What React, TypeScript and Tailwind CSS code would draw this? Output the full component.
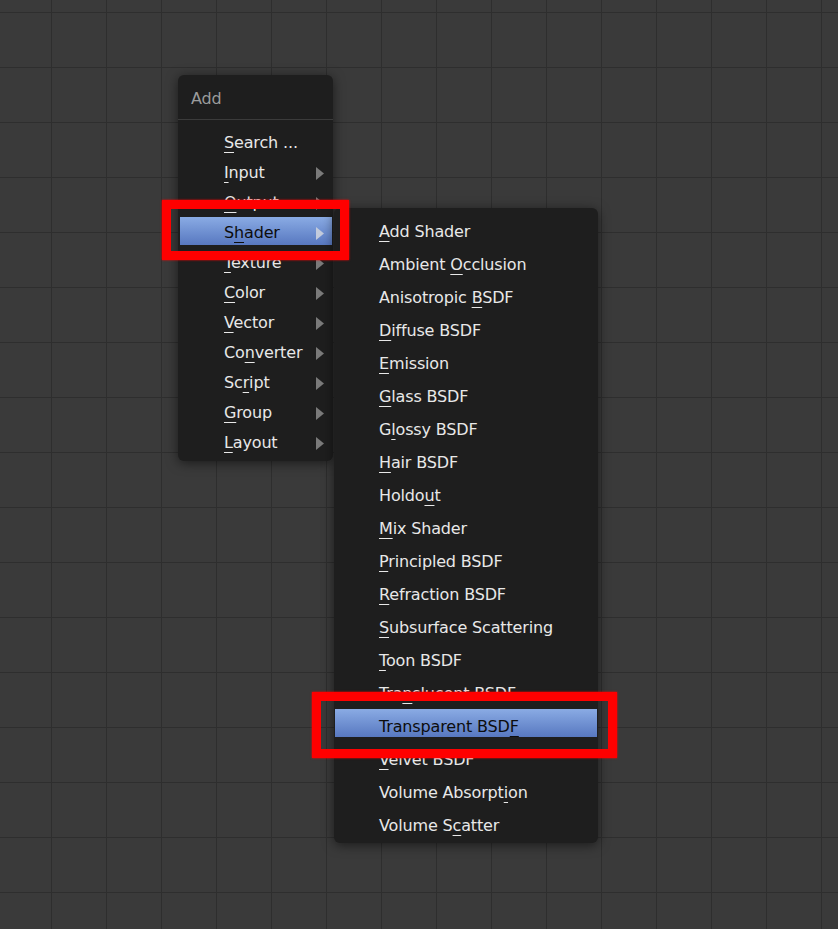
import React from "react";

type Item = { pre: string; key: string; post: string; sub?: boolean };

const addItems: Item[] = [
  { pre: "", key: "S", post: "earch ..." },
  { pre: "", key: "I", post: "nput", sub: true },
  { pre: "", key: "O", post: "utput", sub: true },
  { pre: "S", key: "h", post: "ader", sub: true },
  { pre: "", key: "T", post: "exture", sub: true },
  { pre: "", key: "C", post: "olor", sub: true },
  { pre: "", key: "V", post: "ector", sub: true },
  { pre: "Co", key: "n", post: "verter", sub: true },
  { pre: "Sc", key: "r", post: "ipt", sub: true },
  { pre: "", key: "G", post: "roup", sub: true },
  { pre: "", key: "L", post: "ayout", sub: true },
];

const shaderItems: Item[] = [
  { pre: "", key: "A", post: "dd Shader" },
  { pre: "Ambient ", key: "O", post: "cclusion" },
  { pre: "Anisotropic ", key: "B", post: "SDF" },
  { pre: "", key: "D", post: "iffuse BSDF" },
  { pre: "", key: "E", post: "mission" },
  { pre: "", key: "G", post: "lass BSDF" },
  { pre: "G", key: "l", post: "ossy BSDF" },
  { pre: "", key: "H", post: "air BSDF" },
  { pre: "Holdo", key: "u", post: "t" },
  { pre: "", key: "M", post: "ix Shader" },
  { pre: "", key: "P", post: "rincipled BSDF" },
  { pre: "", key: "R", post: "efraction BSDF" },
  { pre: "", key: "S", post: "ubsurface Scattering" },
  { pre: "", key: "T", post: "oon BSDF" },
  { pre: "Tra", key: "n", post: "slucent BSDF" },
  { pre: "Transparent BSD", key: "F", post: "" },
  { pre: "", key: "V", post: "elvet BSDF" },
  { pre: "Volume Absorpt", key: "i", post: "on" },
  { pre: "Volume S", key: "c", post: "atter" },
];

function Arrow({ active }: { active?: boolean }) {
  return (
    <svg width="8" height="13" viewBox="0 0 8 13" className="shrink-0">
      <polygon points="0,0 8,6.5 0,13" fill={active ? "#c3cbdc" : "#7a7a7a"} />
    </svg>
  );
}

function Label({ item }: { item: Item }) {
  return (
    <span className="whitespace-pre">
      {item.pre}
      <span className="underline decoration-1 underline-offset-[4px]">{item.key}</span>
      {item.post}
    </span>
  );
}

export default function App() {
  return (
    <div
      className="relative h-[929px] w-[838px] overflow-hidden bg-[#3a3a3a] bg-[linear-gradient(to_right,#2e2e2e_1px,transparent_1px),linear-gradient(to_bottom,#2e2e2e_1px,transparent_1px)] bg-[size:55px_55px] bg-[position:51px_12px] text-[16px] tracking-[-0.15px] text-[#e8e8e8]"
      style={{ fontFamily: '"DejaVu Sans", "Liberation Sans", sans-serif' }}
    >
      {/* Add menu */}
      <div className="absolute left-[178px] top-[75px] flex h-[386px] w-[155px] flex-col rounded-md bg-[#1e1e1e] shadow-[0_2px_12px_rgba(0,0,0,0.55)]">
        <div className="flex h-[44px] items-center px-[13px] pt-[4px] text-[#9b9b9b]">Add</div>
        <div className="h-px bg-[#3b3b3b]" />
        <div className="flex flex-col gap-[2px] pl-[2px] pr-[1px] pt-[7px]">
          {addItems.map((it, i) => {
            const active = i === 3;
            return (
              <div
                key={i}
                className={
                  active
                    ? "flex h-[28px] items-center bg-gradient-to-b from-[#8aabe4] to-[#5878c0] pl-[44px] pr-[8px] pt-[4px] text-[#0d0d0d]"
                    : "flex h-[28px] items-center pl-[44px] pr-[8px] pt-[4px]"
                }
              >
                <Label item={it} />
                <div className="ml-auto">{it.sub ? <Arrow active={active} /> : null}</div>
              </div>
            );
          })}
        </div>
      </div>

      {/* Shader submenu */}
      <div className="absolute left-[334px] top-[208px] flex h-[635px] w-[264px] flex-col gap-[5px] rounded-md bg-[#1e1e1e] px-[1px] pt-[6px] shadow-[0_2px_12px_rgba(0,0,0,0.55)]">
        {shaderItems.map((it, i) => {
          const active = i === 15;
          return (
            <div
              key={i}
              className={
                active
                  ? "flex h-[28px] items-center bg-gradient-to-b from-[#8aabe4] to-[#5878c0] pl-[44px] pt-[8px] text-[#0d0d0d]"
                  : "flex h-[28px] items-center pl-[44px] pt-[8px]"
              }
            >
              <Label item={it} />
            </div>
          );
        })}
      </div>

      {/* red highlight frames */}
      <div className="absolute left-[162px] top-[200px] h-[60px] w-[187px] border-[9px] border-[#ff0000] shadow-[0_0_2px_#ff0000]" />
      <div className="absolute left-[312px] top-[692px] h-[66px] w-[305px] border-[9px] border-[#ff0000] shadow-[0_0_2px_#ff0000]" />
    </div>
  );
}
